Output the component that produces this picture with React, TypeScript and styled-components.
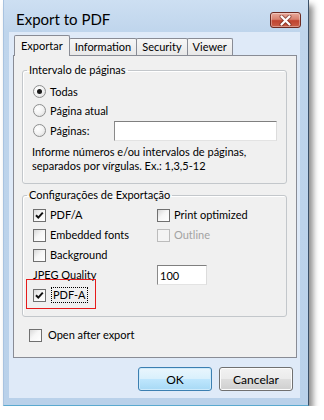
import React from 'react';
import styled, { createGlobalStyle } from 'styled-components';

const GlobalStyle = createGlobalStyle`
  html, body {
    margin: 0;
    padding: 0;
    background: #fff;
  }
  body {
    font-family: Lato, "Noto Sans", sans-serif;
    font-size: 11px;
    color: #000;
  }
`;

const Window = styled.div`
  box-sizing: border-box;
  width: 306px;
  height: 406px;
  margin-left: 3px;
  display: flex;
  flex-direction: column;
  background: linear-gradient(180deg, #cddff2 0%, #bfd5ec 32px, #b9d1ea 100%);
  border-left: 1px solid #a9c3e0;
  border-right: 1px solid #3a5068;
  border-bottom: 1px solid #5aa9cf;
  box-shadow: 4px 5px 6px rgba(0, 0, 0, 0.45);
`;

const TitleBar = styled.div`
  box-sizing: border-box;
  height: 32px;
  padding: 11px 7px 0 12px;
  display: flex;
  justify-content: space-between;
  align-items: flex-start;
`;

const Title = styled.span`
  font-size: 15px;
  line-height: 16px;
`;

const CloseButton = styled.div`
  box-sizing: border-box;
  width: 31px;
  height: 16px;
  margin-top: 1px;
  border: 1px solid #6d2a22;
  border-radius: 3px;
  background: linear-gradient(180deg, #e9a99b 0%, #d7816f 45%, #c0432f 55%, #c95f48 100%);
  box-shadow: inset 0 0 0 1px rgba(255, 255, 255, 0.35);
  display: flex;
  align-items: center;
  justify-content: center;
`;

const Client = styled.div`
  flex: 1;
  margin: 0 8px 7px 5px;
  padding: 3px 3px 7px 4px;
  display: flex;
  flex-direction: column;
  background: #dfeaf8;
`;

const TabStrip = styled.div`
  height: 20px;
  padding-left: 1px;
  display: flex;
  align-items: flex-end;
  position: relative;
  z-index: 1;
`;

const Tab = styled.div<{ active?: boolean }>`
  box-sizing: border-box;
  height: ${p => (p.active ? '21px' : '17px')};
  margin-bottom: ${p => (p.active ? '-1px' : '0')};
  margin-right: -1px;
  padding: ${p => (p.active ? '0 6px 1px' : '0 5px')};
  display: flex;
  align-items: center;
  border: 1px solid #898c95;
  border-bottom: none;
  border-radius: 2px 2px 0 0;
  background: ${p => (p.active ? '#f0f0f0' : 'linear-gradient(180deg, #f7f7f7 0%, #e8e8e8 100%)')};
  line-height: 14px;
  font-size: 11px;
`;

const Panel = styled.div`
  flex: 1;
  display: flex;
  flex-direction: column;
  padding: 7px 9px 0 8px;
  background: #f0f0f0;
  border: 1px solid #898c95;
`;

const Group = styled.fieldset<{ gap?: number; top: number; bottom: number }>`
  margin: ${p => p.gap ?? 0}px 0 0;
  padding: ${p => p.top}px 9px ${p => p.bottom}px 10px;
  min-width: 0;
  border: 1px solid #c3c7cb;
  border-radius: 3px;
  box-shadow: inset 1px 1px 0 #fff;
`;

const Legend = styled.legend`
  padding: 0 2px;
  margin-left: -6px;
  line-height: 14px;
`;

const Row = styled.div<{ h: number }>`
  height: ${p => p.h}px;
  display: flex;
  align-items: center;
  gap: 4px;
`;

const Radio = styled.span<{ checked?: boolean }>`
  box-sizing: border-box;
  width: 13px;
  height: 13px;
  flex: none;
  border: 1px solid #8e8f8f;
  border-radius: 50%;
  background: radial-gradient(circle at 35% 35%, #fff 0%, #f2f2f2 50%, #d6d6d6 100%);
  display: flex;
  align-items: center;
  justify-content: center;

  &::after {
    content: '';
    display: ${p => (p.checked ? 'block' : 'none')};
    width: 5px;
    height: 5px;
    border-radius: 50%;
    background: #1a1a1a;
  }
`;

const Box = styled.span<{ disabled?: boolean }>`
  box-sizing: border-box;
  width: 13px;
  height: 13px;
  flex: none;
  border: 1px solid ${p => (p.disabled ? '#bcbcbc' : '#707070')};
  background: ${p =>
    p.disabled ? '#f4f4f4' : 'linear-gradient(135deg, #d8d8d8 0%, #f6f6f6 45%, #fff 100%)'};
  display: flex;
  align-items: center;
  justify-content: center;
`;

const Text = styled.span<{ disabled?: boolean }>`
  line-height: 14px;
  white-space: nowrap;
  color: ${p => (p.disabled ? '#a3a3a3' : '#000')};
`;

const FocusText = styled(Text)`
  padding: 0 1px;
  margin-left: 1px;
  border: 1px dotted #000;
`;

const TextInput = styled.input<{ w: number }>`
  box-sizing: border-box;
  width: ${p => p.w}px;
  height: 20px;
  margin: 0;
  padding: 0 2px;
  font: inherit;
  border: 1px solid;
  border-color: #7f7f7f #dcdcdc #e3e3e3 #8a8a8a;
  background: #fff;
  outline: none;
`;

const PagesInput = styled(TextInput)`
  margin-left: auto;
`;

const Hint = styled.div`
  margin: 4px 0 0 -1px;
  line-height: 14px;
  white-space: nowrap;
`;

const OptionGrid = styled.div`
  display: grid;
  grid-template-columns: 124px 1fr;
  grid-auto-rows: 20px;
`;

const Cell = styled.div`
  position: relative;
  display: flex;
  align-items: center;
  gap: 4px;
`;

const RedMark = styled.div`
  position: absolute;
  left: -7px;
  top: -6px;
  width: 70px;
  height: 30px;
  box-sizing: border-box;
  border: 1px solid #e61b1b;
  pointer-events: none;
`;

const OpenRow = styled.div`
  height: 20px;
  margin-top: 8px;
  padding-left: 7px;
  display: flex;
  align-items: center;
  gap: 6px;
`;

const ButtonRow = styled.div`
  margin-top: 9px;
  padding-right: 4px;
  display: flex;
  justify-content: flex-end;
  gap: 7px;
`;

const Button = styled.button<{ primary?: boolean }>`
  box-sizing: border-box;
  width: 74px;
  height: 24px;
  padding: 0;
  font: inherit;
  font-size: 12px;
  color: #000;
  border-radius: 3px;
  border: 1px solid ${p => (p.primary ? '#3c7fb1' : '#707070')};
  background: ${p =>
    p.primary
      ? 'linear-gradient(180deg, #eaf6fd 0%, #d9f0fc 48%, #bee6fd 52%, #a7d9f5 100%)'
      : 'linear-gradient(180deg, #f2f2f2 0%, #ebebeb 48%, #dddddd 52%, #cfcfcf 100%)'};
  box-shadow: inset 0 0 0 1px ${p => (p.primary ? '#cdeafb' : '#fbfbfb')};
`;

const Check = () => (
  <svg width="11" height="11" viewBox="0 0 11 11">
    <path d="M2 5.2 L4.3 7.6 L8.8 2.6" fill="none" stroke="#111" strokeWidth="2" />
  </svg>
);

const CloseX = () => (
  <svg width="13" height="11" viewBox="0 0 13 11">
    <path d="M2.5 1.5 L10.5 9.5 M10.5 1.5 L2.5 9.5" stroke="#5b1c12" strokeOpacity="0.55" strokeWidth="4" strokeLinecap="round" />
    <path d="M2.5 1.5 L10.5 9.5 M10.5 1.5 L2.5 9.5" stroke="#fff" strokeWidth="2.2" strokeLinecap="round" />
  </svg>
);

const CheckOption = ({ label, checked, disabled }: { label: string; checked?: boolean; disabled?: boolean }) => (
  <Cell>
    <Box disabled={disabled}>{checked && <Check />}</Box>
    <Text disabled={disabled}>{label}</Text>
  </Cell>
);

export default function App() {
  return (
    <>
      <GlobalStyle />
      <Window>
        <TitleBar>
          <Title>Export to PDF</Title>
          <CloseButton>
            <CloseX />
          </CloseButton>
        </TitleBar>
        <Client>
          <TabStrip>
            <Tab active>Exportar</Tab>
            <Tab>Information</Tab>
            <Tab>Security</Tab>
            <Tab>Viewer</Tab>
          </TabStrip>
          <Panel>
            <Group top={5} bottom={10}>
              <Legend>Intervalo de páginas</Legend>
              <Row h={19}>
                <Radio checked />
                <Text>Todas</Text>
              </Row>
              <Row h={19}>
                <Radio />
                <Text>Página atual</Text>
              </Row>
              <Row h={21}>
                <Radio />
                <Text>Páginas:</Text>
                <PagesInput w={163} defaultValue="" />
              </Row>
              <Hint>
                Informe números e/ou intervalos de páginas,
                <br />
                separados por vírgulas. Ex.: 1,3,5-12
              </Hint>
            </Group>
            <Group gap={4} top={3} bottom={11}>
              <Legend>Configurações de Exportação</Legend>
              <OptionGrid>
                <CheckOption label="PDF/A" checked />
                <CheckOption label="Print optimized" />
                <CheckOption label="Embedded fonts" />
                <CheckOption label="Outline" disabled />
                <CheckOption label="Background" />
                <div />
                <Cell>
                  <Text>JPEG Quality</Text>
                </Cell>
                <Cell>
                  <TextInput w={50} defaultValue="100" />
                </Cell>
                <Cell>
                  <RedMark />
                  <Box>
                    <Check />
                  </Box>
                  <FocusText>PDF-A</FocusText>
                </Cell>
              </OptionGrid>
            </Group>
            <OpenRow>
              <Box />
              <Text>Open after export</Text>
            </OpenRow>
          </Panel>
          <ButtonRow>
            <Button primary>OK</Button>
            <Button>Cancelar</Button>
          </ButtonRow>
        </Client>
      </Window>
    </>
  );
}
